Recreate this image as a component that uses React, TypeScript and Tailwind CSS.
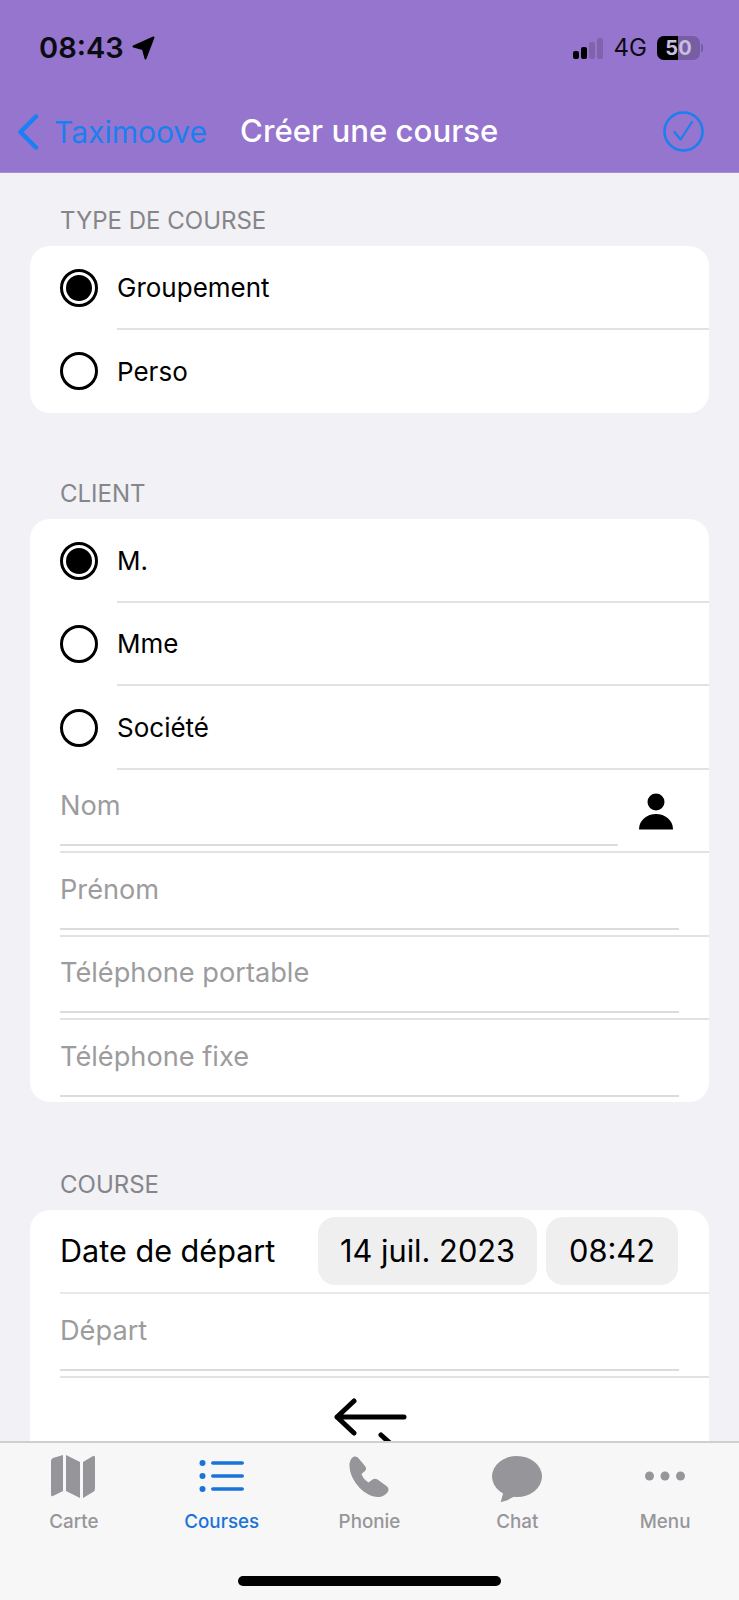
const font = { fontFamily: "Inter, 'Liberation Sans', sans-serif" };

function Radio({ checked }: { checked?: boolean }) {
  return (
    <div className="w-[38px] h-[38px] rounded-full border-[3px] border-black flex items-center justify-center shrink-0">
      {checked && <div className="w-[26px] h-[26px] rounded-full bg-black" />}
    </div>
  );
}

function RadioRow({ label, checked, last }: { label: string; checked?: boolean; last?: boolean }) {
  return (
    <div className="flex h-[83.5px] pl-[30px]">
      <div className="w-[57px] flex items-center">
        <Radio checked={checked} />
      </div>
      <div className={`flex-1 flex items-center pt-[1px] text-[26px] text-black ${last ? "" : "border-b-2 border-[#e2e2e4]"}`}>
        {label}
      </div>
    </div>
  );
}

function FieldRow({ label, icon, last }: { label: string; icon?: boolean; last?: boolean }) {
  return (
    <div className={`relative ml-[30px] flex flex-col ${last ? "h-[82px]" : "h-[83.5px] border-b-2 border-[#e2e2e4]"}`}>
      <div className={`flex-1 flex items-center mb-[5px] text-[27.2px] text-[#9c9c9e] border-b-2 border-[#dcdcde] ${icon ? "mr-[91px]" : "mr-[30px]"}`}>
        {label}
      </div>
      {icon && (
        <svg className="absolute right-[36px] top-[23px]" width="34" height="37" viewBox="0 0 34 37">
          <circle cx="17" cy="9" r="8.5" fill="#000" />
          <path d="M0 36.5 C0 27 8 21 17 21 C26 21 34 27 34 36.5 Z" fill="#000" />
        </svg>
      )}
    </div>
  );
}

function SectionLabel({ children }: { children: string }) {
  return <div className="h-[32px] mb-[10px] pt-[2px] pl-[60px] flex items-center text-[24px] text-[#85858a]">{children}</div>;
}

function Tab({ label, active, children }: { label: string; active?: boolean; children: React.ReactNode }) {
  return (
    <div className="flex-1 flex flex-col items-center">
      <div className="h-[52px] flex items-center justify-center">{children}</div>
      <div className={`mt-[6px] text-[18.8px] font-medium ${active ? "text-[#1a73d9]" : "text-[#96969a]"}`}>{label}</div>
    </div>
  );
}

export default function App() {
  return (
    <div className="w-[739px] h-[1600px] flex flex-col overflow-hidden bg-[#f1f1f6]" style={font}>
      {/* Header */}
      <div className="h-[173px] shrink-0 bg-[#9575cd] border-b border-[#a78fd0] flex flex-col">
        <div className="h-[94px] flex items-center pt-[1px] pl-[39px] pr-[36px]">
          <span className="text-[29px] font-semibold text-[#0b0b14] leading-none">08:43</span>
          <svg className="ml-[8px]" width="23" height="24" viewBox="0 0 23 24">
            <path d="M1.5 10.5 L21.5 1.5 L13.5 22.5 L11 13 Z" fill="#000" stroke="#000" strokeWidth="2" strokeLinejoin="round" />
          </svg>
          <div className="ml-auto flex items-center">
            <div className="flex items-end gap-[2px] h-[22px]">
              <div className="w-[6px] h-[8px] rounded-[2px] bg-black" />
              <div className="w-[6px] h-[12px] rounded-[2px] bg-black" />
              <div className="w-[6px] h-[17px] rounded-[2px] bg-[#7f64ad]" />
              <div className="w-[6px] h-[21px] rounded-[2px] bg-[#7f64ad]" />
            </div>
            <span className="ml-[11px] text-[24px] text-[#0b0b14] leading-none">4G</span>
            <div className="ml-[10px] relative w-[43px] h-[24px] rounded-[7px] overflow-hidden bg-[#765ea3] flex items-center justify-center">
              <div className="absolute left-0 top-0 bottom-0 w-[21px] bg-black" />
              <span className="relative text-[20px] font-bold text-[#c9bde0] leading-none">50</span>
            </div>
            <div className="ml-[1px] w-[2px] h-[8px] rounded-r bg-[#765ea3]" />
          </div>
        </div>
        <div className="flex-1 flex items-center pl-[17px] pr-[35px] pb-[3px]">
          <svg width="22" height="36" viewBox="0 0 22 36" fill="none">
            <path d="M19 2.5 L3.5 18 L19 33.5" stroke="#1a80f5" strokeWidth="4.5" strokeLinecap="round" strokeLinejoin="round" />
          </svg>
          <span className="ml-[15px] text-[30px] text-[#1a7ff0] leading-none">Taximoove</span>
          <span className="ml-[33px] text-[31.2px] font-medium text-white leading-none">Créer une course</span>
          <svg className="ml-auto" width="41" height="41" viewBox="0 0 41 41" fill="none">
            <circle cx="20.5" cy="20.5" r="19" stroke="#1a7ff0" strokeWidth="2.5" />
            <path d="M11.5 21 L17.5 28.5 L29 11" stroke="#1a7ff0" strokeWidth="2.2" strokeLinecap="round" strokeLinejoin="round" />
          </svg>
        </div>
      </div>

      {/* Form */}
      <div className="flex-1 min-h-0 overflow-hidden pt-[31px]">
        <SectionLabel>TYPE DE COURSE</SectionLabel>
        <div className="mx-[30px] bg-white rounded-[20px] overflow-hidden">
          <RadioRow label="Groupement" checked />
          <RadioRow label="Perso" last />
        </div>

        <div className="mt-[64px]">
          <SectionLabel>CLIENT</SectionLabel>
        </div>
        <div className="mx-[30px] bg-white rounded-[20px] overflow-hidden">
          <RadioRow label="M." checked />
          <RadioRow label="Mme" />
          <RadioRow label="Société" />
          <FieldRow label="Nom" icon />
          <FieldRow label="Prénom" />
          <FieldRow label="Téléphone portable" />
          <FieldRow label="Téléphone fixe" last />
        </div>

        <div className="mt-[66px]">
          <SectionLabel>COURSE</SectionLabel>
        </div>
        <div className="mx-[30px] bg-white rounded-t-[20px] pb-[40px]">
          <div className="ml-[30px] h-[84px] flex items-center border-b-2 border-[#e8e8ea]">
            <span className="text-[30.6px] text-black">Date de départ</span>
            <div className="ml-auto flex gap-[9px] mr-[31px]">
              <div className="w-[219px] h-[68px] rounded-[17px] bg-[#efeff0] flex items-center justify-center text-[30.8px] text-black">
                14 juil. 2023
              </div>
              <div className="w-[132px] h-[68px] rounded-[17px] bg-[#efeff0] flex items-center justify-center text-[30.8px] text-black">
                08:42
              </div>
            </div>
          </div>
          <FieldRow label="Départ" />
          <div className="flex justify-center pt-[20px]">
            <svg width="74" height="46" viewBox="0 0 74 46" fill="none">
              <path d="M71 19 H4 M21 3 L4 19 L21 35" stroke="#000" strokeWidth="5" strokeLinecap="round" strokeLinejoin="round" />
              <path d="M48 37 L58 46" stroke="#000" strokeWidth="5" strokeLinecap="round" />
            </svg>
          </div>
        </div>
      </div>

      {/* Tab bar */}
      <div className="h-[159px] shrink-0 relative bg-[#f7f7f7] border-t-2 border-[#cfcfd1] pt-[7px] flex">
        <Tab label="Carte">
          <svg className="-ml-[2px]" width="46" height="43" viewBox="0 0 46 43" fill="#96969a">
            <path d="M1 6 Q1 4 3 3 L13 0 V36 L3 41 Q1 42 1 39 Z" />
            <path d="M16 0 L30 7 V43 L16 36 Z" />
            <path d="M33 7 L43 1 Q45 0 45 3 V33 Q45 36 43 37 L33 43 Z" />
          </svg>
        </Tab>
        <Tab label="Courses" active>
          <svg width="46" height="32" viewBox="0 0 46 32" fill="#1a73d9">
            <circle cx="3.5" cy="3" r="3" />
            <circle cx="3.5" cy="16" r="3" />
            <circle cx="3.5" cy="29" r="3" />
            <rect x="12" y="1.2" width="33" height="3.6" rx="1.8" />
            <rect x="12" y="14.2" width="33" height="3.6" rx="1.8" />
            <rect x="12" y="27.2" width="33" height="3.6" rx="1.8" />
          </svg>
        </Tab>
        <Tab label="Phonie">
          <svg width="40" height="41" viewBox="0 0 40 41" fill="#96969a">
            <path d="M5 0.5 C7 0 9 1 11 4 L16 10 C17.5 12 17.5 13.5 16 15 L12.5 18 C13.5 21 16 24.5 19.5 26.5 L23.5 23.5 C25 22.5 27 22.5 28.5 23.5 L37.5 30 C39.5 31.5 40 33.5 39 35.5 C37 39 33 41 29 41 C16 41 1 25 0.5 10 C0.3 6 2 2 5 0.5 Z" />
          </svg>
        </Tab>
        <Tab label="Chat">
          <svg className="mt-[5px]" width="50" height="46" viewBox="0 0 50 46" fill="#96969a">
            <ellipse cx="25" cy="20.5" rx="25" ry="20.5" />
            <path d="M12 34 L9 45 Q8 46.5 11 45.5 Q20 43 25 38 Z" />
          </svg>
        </Tab>
        <Tab label="Menu">
          <svg width="40" height="12" viewBox="0 0 40 12" fill="#96969a">
            <circle cx="4.5" cy="6" r="4.5" />
            <circle cx="20" cy="6" r="4.5" />
            <circle cx="35.5" cy="6" r="4.5" />
          </svg>
        </Tab>
        <div className="absolute left-[238px] bottom-[14px] w-[263px] h-[10px] rounded-full bg-black" />
      </div>
    </div>
  );
}
